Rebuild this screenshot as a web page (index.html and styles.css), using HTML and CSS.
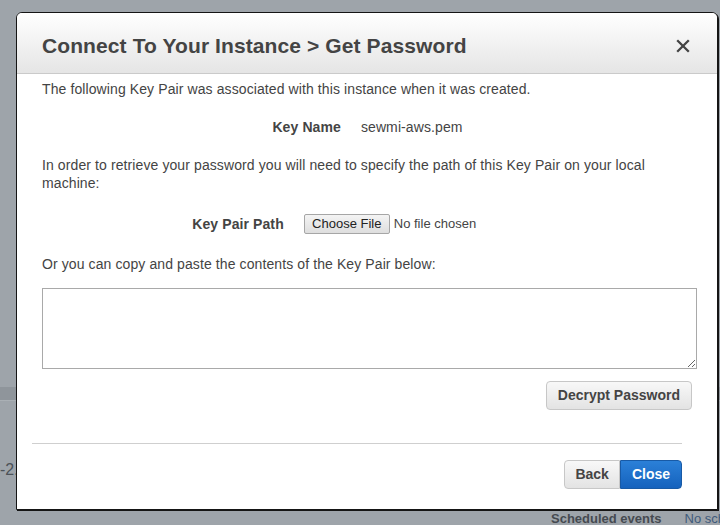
FILE: index.html
```html
<!DOCTYPE html>
<html lang="en">
<head>
<meta charset="utf-8">
<title>Connect To Your Instance</title>
<link rel="stylesheet" href="styles.css">
</head>
<body>
<div class="page">
  <div class="page-bar"></div>
  <div class="page-mid"><span class="page-num">-2.</span></div>
  <div class="page-foot"><span class="sched">Scheduled events</span><span class="nosched">No scheduled events</span></div>
</div>

<div class="modal">
  <div class="modal-header">
    <h1 class="modal-title">Connect To Your Instance &gt; Get Password</h1>
    <button class="close-x" aria-label="Close">
      <svg width="14" height="14" viewBox="0 0 14 14"><path d="M1.2 1.2 L12.8 12.8 M12.8 1.2 L1.2 12.8" stroke="#444" stroke-width="2.3" fill="none"/></svg>
    </button>
  </div>
  <div class="modal-body">
    <p class="intro">The following Key Pair was associated with this instance when it was created.</p>
    <div class="field-row key-name-row">
      <span class="field-label">Key Name</span>
      <span class="field-value">sewmi-aws.pem</span>
    </div>
    <p class="instr">In order to retrieve your password you will need to specify the path of this Key Pair on your local machine:</p>
    <div class="field-row file-row">
      <span class="field-label">Key Pair Path</span>
      <span class="file-input"><span class="file-btn">Choose File</span><span class="file-text">No file chosen</span></span>
    </div>
    <p class="copy">Or you can copy and paste the contents of the Key Pair below:</p>
    <textarea class="key-text"></textarea>
    <div class="decrypt-row"><button class="btn">Decrypt Password</button></div>
  </div>
  <div class="modal-footer">
    <div class="btn-group">
      <button class="btn btn-left">Back</button><button class="btn btn-primary btn-right">Close</button>
    </div>
  </div>
</div>
</body>
</html>
```

FILE: styles.css
```css
* { box-sizing: border-box; }
html, body { margin: 0; padding: 0; }
body {
  width: 720px;
  height: 525px;
  overflow: hidden;
  background: #9ea4aa;
  font-family: "Liberation Sans", Arial, sans-serif;
  color: #444;
  position: relative;
}

/* background page */
.page { padding-top: 387px; }
.page-bar {
  height: 14px;
  background: #8f959b;
  border-bottom: 1px solid #aab0b5;
}
.page-mid {
  height: 110px;
  padding-top: 59px;
}
.page-num {
  display: block;
  font-size: 16px;
  line-height: 20px;
  color: #4c5258;
}
.page-foot {
  display: flex;
  gap: 23px;
  padding-left: 551px;
  white-space: nowrap;
  font-size: 13px;
  line-height: 16px;
}
.sched { font-weight: bold; color: #454a50; }
.nosched { color: #3f5a7a; }

/* modal */
.modal {
  position: absolute;
  left: 16px;
  top: 12px;
  width: 702px;
  background: #fff;
  border: 1px solid #151515;
  border-radius: 6px 6px 0 0;
  box-shadow: 1px 1px 0 #151515;
}
.modal-header {
  height: 61px;
  display: flex;
  justify-content: space-between;
  align-items: flex-start;
  padding: 21px 27px 0 25px;
  background: linear-gradient(to bottom, #ffffff 0%, #e5e5e5 100%);
  border-bottom: 1px solid #cacaca;
  border-radius: 5px 5px 0 0;
}
.modal-title {
  margin: 0;
  font-size: 21px;
  line-height: 24px;
  font-weight: bold;
  letter-spacing: 0.1px;
  color: #444;
}
.close-x {
  margin-top: 5px;
  padding: 0;
  border: 0;
  background: none;
  width: 14px;
  height: 14px;
  display: block;
}
.close-x svg { display: block; }

.modal-body {
  padding: 6px 20px 33px 25px;
  font-size: 14px;
  line-height: 18px;
  letter-spacing: 0.1px;
}
.intro { margin: 0; }
.field-row {
  display: flex;
  justify-content: center;
  align-items: center;
  gap: 20px;
}
.field-label { font-weight: bold; }
.key-name-row { margin-top: 20px; padding-right: 4px; }
.instr { margin: 20px 0 0; }
.file-row { margin-top: 22px; height: 20px; }
.file-input {
  width: 243px;
  display: flex;
  align-items: center;
  gap: 4px;
  font-size: 13px;
  letter-spacing: 0;
}
.file-btn {
  width: 86px;
  height: 20px;
  line-height: 18px;
  text-align: center;
  color: #222;
  border: 1px solid #a6a6a6;
  border-radius: 2px;
  background: linear-gradient(to bottom, #f4f4f4, #dedede);
}
.file-text { color: #444; }
.copy { margin: 21px 0 0; }
.key-text {
  display: block;
  margin-top: 15px;
  width: 655px;
  height: 81px;
  border: 1px solid #a9a9a9;
  border-radius: 0;
  resize: vertical;
  font-family: "Liberation Mono", monospace;
}
.decrypt-row {
  margin-top: 12px;
  display: flex;
  justify-content: flex-end;
  padding-right: 5px;
}

.btn {
  font-family: "Liberation Sans", Arial, sans-serif;
  font-size: 14px;
  font-weight: bold;
  line-height: 17px;
  padding: 5px 11px;
  color: #444;
  letter-spacing: 0;
  border: 1px solid #c7c7c7;
  border-radius: 4px;
  background: linear-gradient(to bottom, #f8f8f8, #e3e3e3);
}

.modal-footer {
  margin: 0 35px 0 15px;
  border-top: 1px solid #cfcfcf;
  padding: 16px 0 20px;
  display: flex;
  justify-content: flex-end;
}
.btn-group { display: flex; }
.btn-left { border-radius: 4px 0 0 4px; padding: 5px 10px; }
.btn-right { border-radius: 0 4px 4px 0; }
.btn-primary {
  color: #fff;
  border-color: #185aa6;
  background: linear-gradient(to bottom, #2b80d8, #1562bd);
}
```
